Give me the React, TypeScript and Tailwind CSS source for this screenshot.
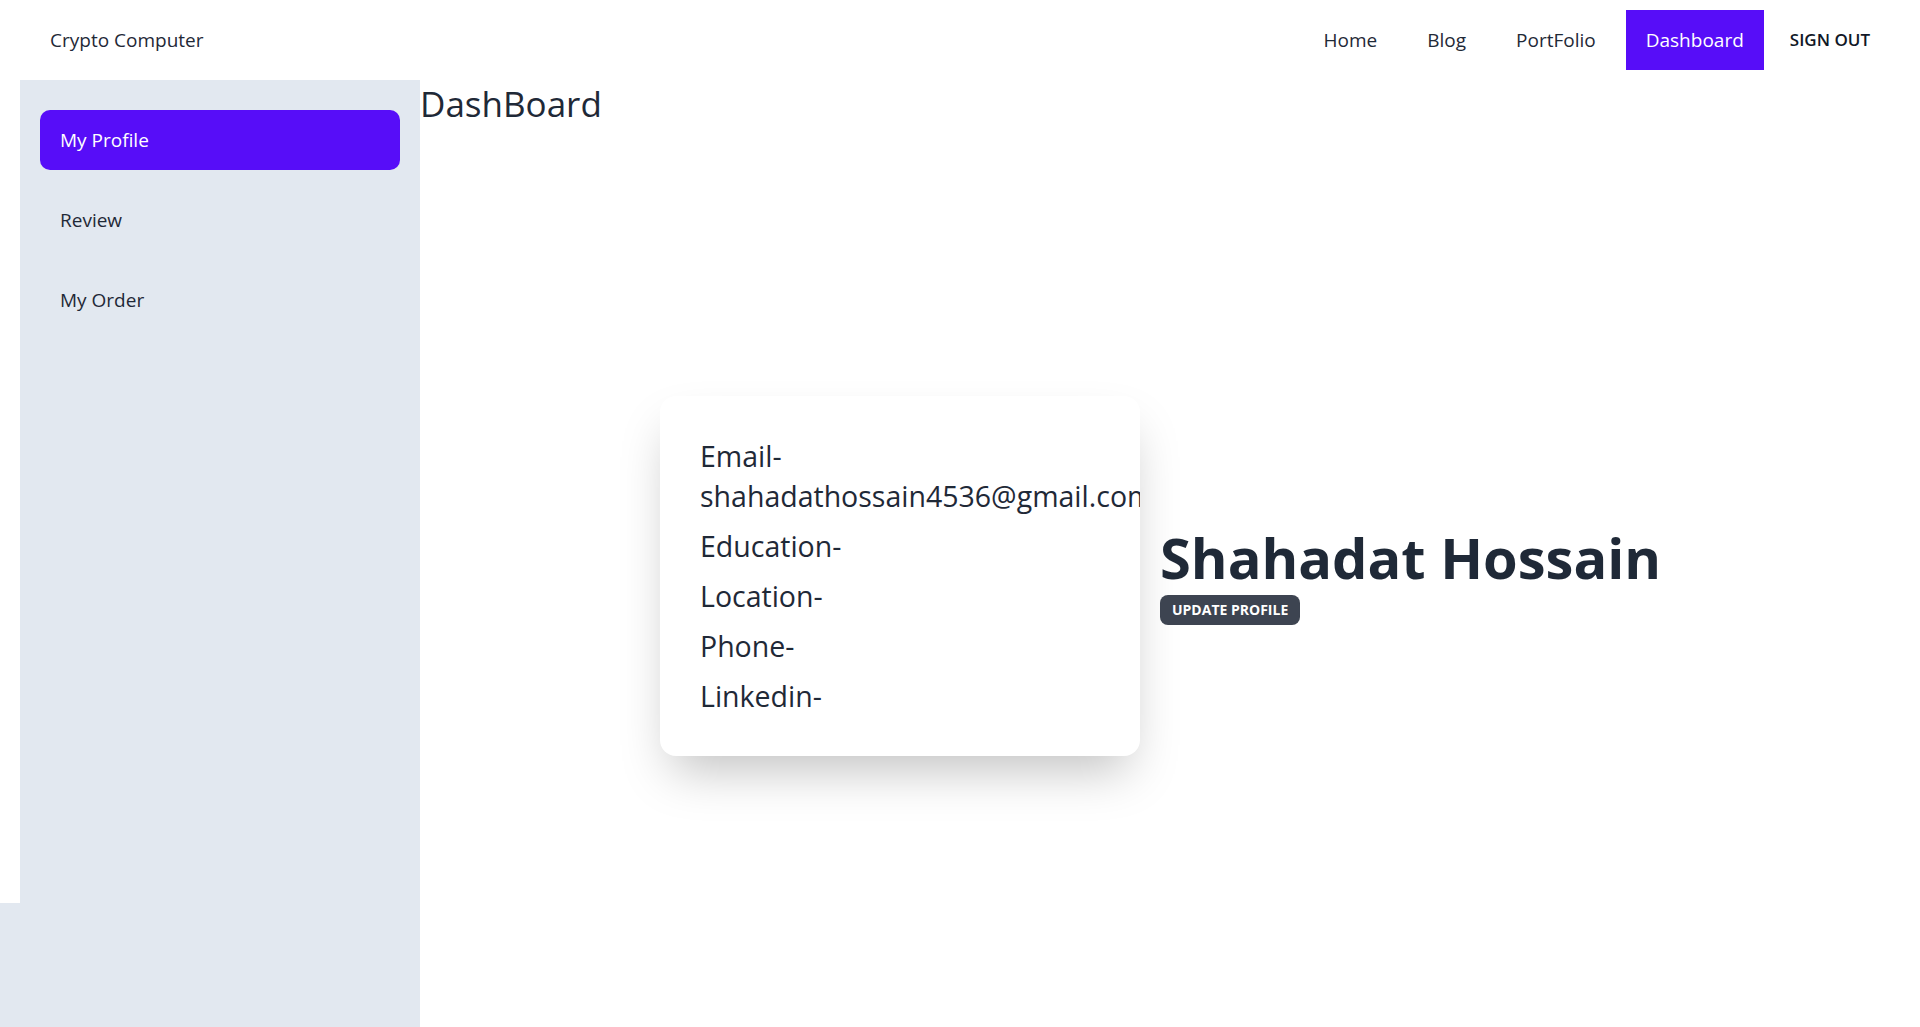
import React from "react";

export default function App() {
  const navItems = ["Home", "Blog", "PortFolio"];
  return (
    <div className="min-h-screen bg-white font-['Open_Sans',sans-serif] text-[#1f2937]">
      <nav className="h-20 flex items-center justify-between px-[30px]">
        <a className="px-5 text-[19px] text-[#1f2937]">Crypto Computer</a>
        <div className="flex items-center gap-[10px]">
          {navItems.map((n) => (
            <a key={n} className="h-[60px] px-5 flex items-center text-[19px]">
              {n}
            </a>
          ))}
          <a className="h-[60px] px-5 flex items-center text-[19px] bg-[#570df8] text-white">
            Dashboard
          </a>
          <button className="h-[60px] pl-4 pr-5 flex items-center text-[17px] font-semibold text-[#111827]">
            SIGN OUT
          </button>
        </div>
      </nav>
      <div className="flex h-[947px]">
        <aside className="w-[420px] shrink-0 flex flex-col">
          <div className="flex h-[823px]">
            <div className="w-5 bg-white" />
            <div className="flex-1 bg-slate-200 px-5 pt-[30px] flex flex-col gap-5">
              <a className="h-[60px] px-5 rounded-[10px] flex items-center text-[19px] bg-[#570df8] text-white">
                My Profile
              </a>
              <a className="h-[60px] px-5 rounded-[10px] flex items-center text-[19px]">Review</a>
              <a className="h-[60px] px-5 rounded-[10px] flex items-center text-[19px]">My Order</a>
            </div>
          </div>
          <div className="flex-1 bg-slate-200" />
        </aside>
        <main className="flex-1 flex flex-col">
          <h1 className="text-[35px] leading-10 mt-1">DashBoard</h1>
          <div className="flex-1 flex items-center justify-center gap-5">
            <div className="w-[480px] shrink-0 rounded-2xl bg-white shadow-2xl overflow-hidden p-10 flex flex-col gap-[10px] text-[28.5px] leading-10">
              <p>Email- shahadathossain4536@gmail.com</p>
              <p>Education-</p>
              <p>Location-</p>
              <p>Phone-</p>
              <p>Linkedin-</p>
            </div>
            <div className="w-[520px] shrink-0 flex flex-col items-start">
              <h2 className="text-[56px] leading-[60px] font-bold whitespace-nowrap text-[#1f2937]">Shahadat Hossain</h2>
              <button className="mt-2 h-[30px] px-3 rounded-lg bg-[#3d4451] text-white text-sm font-bold uppercase">
                Update Profile
              </button>
            </div>
          </div>
        </main>
      </div>
    </div>
  );
}
